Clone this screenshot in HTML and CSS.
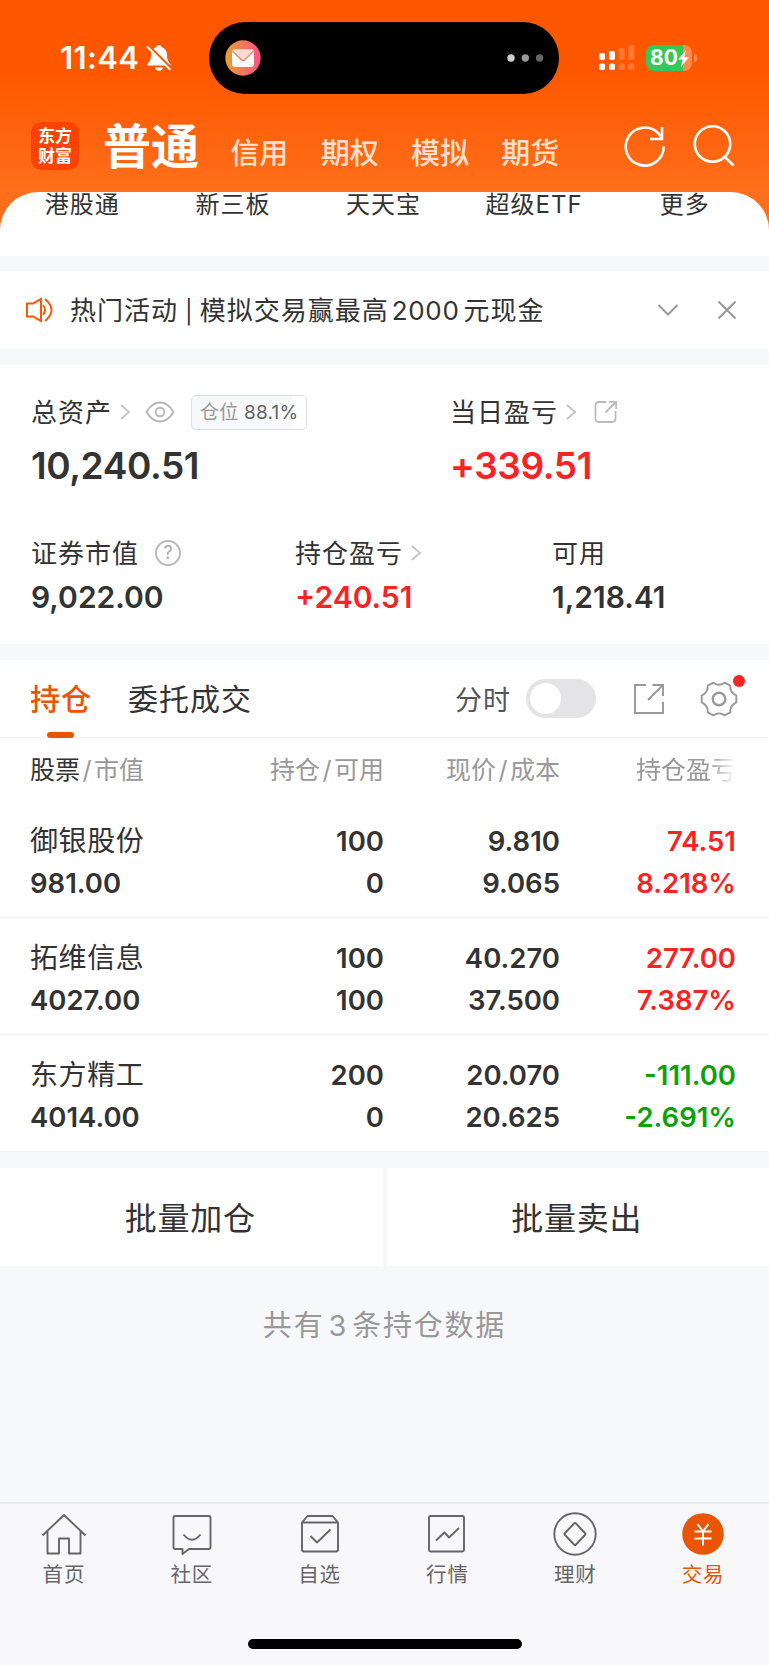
FILE: index.html
```html
<!DOCTYPE html>
<html lang="zh-CN">
<head>
    <meta charset="UTF-8">
    <meta name="viewport" content="width=device-width, initial-scale=1.0">
    <title>普通交易</title>
    <link rel="stylesheet" href="styles.css">
</head>
<body>
    <header class="header">
        <div class="status-bar">
            <span class="time">11:44</span>
            <svg class="bell" width="26" height="28" viewBox="0 0 26 28">
                <path d="M13 1c-1.600 0-2.500 1-2.700 2.200C6.500 4.400 5 7.500 5 11c0 5-1.500 6.500-3.500 9v1.500h23V20c-2-2.500-3.500-4-3.500-9 0-3.500-1.500-6.600-5.300-7.800C15.500 2 14.600 1 13 1z" fill="#fff"/>
                <path d="M8.800 23.500h8.400c-.7 2-2.200 3.300-4.200 3.300s-3.500-1.300-4.200-3.300z" fill="#fff"/>
                <path d="M2.500 1.500L27 26" stroke="#ff5700" stroke-width="2.400"/>
                <path d="M1 2.500L24.500 26" stroke="#fff" stroke-width="2"/>
            </svg>
            <div class="island">
                <svg width="36" height="36" viewBox="0 0 36 36">
                    <defs>
                        <linearGradient id="mail" x1="0" x2="1" y1="0" y2="0">
                            <stop offset="0" stop-color="#e8a030"/>
                            <stop offset="1" stop-color="#ff4f8b"/>
                        </linearGradient>
                    </defs>
                    <circle cx="18" cy="18" r="17.700" fill="url(#mail)"/>
                    <rect x="7" y="9.500" width="22" height="17.500" rx="3" fill="#fff"/>
                    <path d="M8 9.500h20l-8.500 10q-1.500 1.500-3 0z" fill="#ffdcd2"/>
                    <path d="M7.500 11l9 9q1.500 1.300 3 0l9-9" fill="none" stroke="#f3806a" stroke-width="1.300"/>
                </svg>
                <svg width="38" height="8" viewBox="0 0 38 8">
                    <circle cx="4" cy="4" r="3.700" fill="#d0d0d0"/>
                    <circle cx="18.300" cy="4" r="3.700" fill="#999"/>
                    <circle cx="32.600" cy="4" r="3.700" fill="#666"/>
                </svg>
            </div>
            <svg class="signal" width="36" height="26" viewBox="0 0 36 26" fill="#fff">
                <rect x="0" y="8" width="6" height="7" rx="1.800"/>
                <rect x="0" y="18.500" width="6" height="6.500" rx="1.800"/>
                <rect x="10" y="6" width="6" height="9" rx="1.800"/>
                <rect x="10" y="18.500" width="6" height="6.500" rx="1.800"/>
                <g opacity=".2">
                    <rect x="19.700" y="3" width="6" height="12" rx="1.800"/>
                    <rect x="19.700" y="18.500" width="6" height="6.500" rx="1.800"/>
                    <rect x="29.300" y="0" width="6" height="15" rx="1.800"/>
                    <rect x="29.300" y="18.500" width="6" height="6.500" rx="1.800"/>
                </g>
            </svg>
            <div class="battery">
                <span>80</span>
                <svg width="11" height="17" viewBox="0 0 11 17"><path d="M8 0L0 9.500h4.500L3 17l8-10H6.300z" fill="#fff"/></svg>
            </div>
        </div>
        <div class="nav-top">
            <div class="logo">东方<br>财富</div>
            <div class="account-tabs">
                <span class="current">普通</span>
                <span>信用</span>
                <span>期权</span>
                <span>模拟</span>
                <span>期货</span>
            </div>
            <svg class="refresh" width="42" height="42" viewBox="0 0 42 42" fill="none" stroke="#fff" stroke-width="2.600">
                <path d="M39.700 21.500A19 19 0 1 1 34.500 8.500l3.500 4.500"/>
                <path d="M38 2v12H26"/>
            </svg>
            <svg class="search" width="42" height="42" viewBox="0 0 42 42" fill="none" stroke="#fff" stroke-width="2.600">
                <circle cx="19.500" cy="19" r="17.700"/>
                <path d="M31.500 31.500l9 9"/>
            </svg>
        </div>
    </header>

    <nav class="shortcuts">
        <span>港股通</span>
        <span>新三板</span>
        <span>天天宝</span>
        <span>超级ETF</span>
        <span>更多</span>
    </nav>

    <section class="notice">
        <svg width="28" height="26" viewBox="0 0 28 26" fill="none" stroke="#ff5700" stroke-width="2">
            <path d="M2 6.500h6l8-4.500v22l-8-4.500H2z"/>
            <path d="M18 8q4 5 0 10"/>
            <path d="M20 2q13 11 0 22"/>
        </svg>
        <p>热门活动<span class="bar">|</span>模拟交易赢最高<span class="amount">2000</span>元现金</p>
        <svg class="down" width="22" height="14" viewBox="0 0 22 14" fill="none" stroke="#999" stroke-width="2"><path d="M1.500 2L11 11.500 20.500 2"/></svg>
        <svg width="20" height="20" viewBox="0 0 20 20" fill="none" stroke="#999" stroke-width="2"><path d="M1.500 1.500l17 17M18.500 1.500l-17 17"/></svg>
    </section>

    <section class="assets">
        <div class="asset-row main-row">
            <div class="asset">
                <div class="label"><span>总资产</span>
                    <svg class="arrow" width="12" height="18" viewBox="0 0 12 18"><path d="M2 2l8 7-8 7"/></svg>
                    <svg class="eye" width="30" height="22" viewBox="0 0 30 22" fill="none" stroke="#b8b8b8" stroke-width="1.900">
                        <path d="M1.500 11Q7 1.500 15 1.500T28.500 11Q23 20.500 15 20.500T1.500 11z"/>
                        <circle cx="15" cy="11" r="4.300"/>
                    </svg>
                    <div class="position">仓位 <b>88.1%</b></div>
                </div>
                <div class="value">10,240.51</div>
            </div>
            <div class="asset">
                <div class="label"><span>当日盈亏</span>
                    <svg class="arrow" width="12" height="18" viewBox="0 0 12 18"><path d="M2 2l8 7-8 7"/></svg>
                    <svg class="share" width="24" height="24" viewBox="0 0 24 24" fill="none" stroke="#bbb" stroke-width="1.800">
                        <path d="M12 2H5Q1.500 2 1.500 5.500v13Q1.500 22 5 22h13q3.500 0 3.500-3.500V11M11.500 12.500L22 2M15 1.800h7.200V9"/>
                    </svg>
                </div>
                <div class="value up">+339.51</div>
            </div>
        </div>
        <div class="asset-row sub-row">
            <div class="asset">
                <div class="label"><span>证券市值</span>
                    <div class="help">?</div>
                </div>
                <div class="value">9,022.00</div>
            </div>
            <div class="asset">
                <div class="label"><span>持仓盈亏</span>
                    <svg class="arrow" width="12" height="18" viewBox="0 0 12 18"><path d="M2 2l8 7-8 7"/></svg>
                </div>
                <div class="value up">+240.51</div>
            </div>
            <div class="asset">
                <div class="label"><span>可用</span></div>
                <div class="value">1,218.41</div>
            </div>
        </div>
    </section>

    <section class="holdings">
        <div class="tabs">
            <span class="tab active">持仓</span>
            <span class="tab">委托成交</span>
            <span class="chart-label">分时</span>
            <span class="switch"></span>
            <svg class="export" width="32" height="32" viewBox="0 0 32 32" fill="none" stroke="#999" stroke-width="1.900">
                <path d="M13 2H2v28h28V19M15 17L29 3M19.500 2H30v11"/>
            </svg>
            <div class="gear">
                <svg width="38" height="38" viewBox="0 0 38 38" fill="none" stroke="#999" stroke-width="1.900" stroke-linejoin="round">
                    <path d="M13.500 2.700Q19 7 24.500 2.700L30.300 5.600Q29.500 12 36.300 15.600V22.400Q29.500 26 30.300 32.400L24.500 35.300Q19 31.500 13.500 35.300L7.700 32.400Q8.500 26 1.700 22.400V15.600Q8.500 12 7.700 5.600z"/>
                    <circle cx="19" cy="19" r="6.300" stroke-width="2.400"/>
                </svg>
                <i class="dot"></i>
            </div>
        </div>
        <div class="row head">
            <div><em>股票</em><i>/</i>市值</div>
            <div>持仓<i>/</i>可用</div>
            <div>现价<i>/</i>成本</div>
            <div class="fade">持仓盈亏</div>
        </div>
        <div class="row">
            <div><span class="name">御银股份</span><br>981.00</div>
            <div>100<br>0</div>
            <div>9.810<br>9.065</div>
            <div class="up">74.51<br>8.218%</div>
        </div>
        <div class="row">
            <div><span class="name">拓维信息</span><br>4027.00</div>
            <div>100<br>100</div>
            <div>40.270<br>37.500</div>
            <div class="up">277.00<br>7.387%</div>
        </div>
        <div class="row">
            <div><span class="name">东方精工</span><br>4014.00</div>
            <div>200<br>0</div>
            <div>20.070<br>20.625</div>
            <div class="down-price">-111.00<br>-2.691%</div>
        </div>
    </section>

    <div class="batch">
        <button>批量加仓</button>
        <button>批量卖出</button>
    </div>
    <p class="total">共有<span>3</span>条持仓数据</p>

    <footer class="tab-bar">
        <div class="items">
            <a>
                <svg width="46" height="46" viewBox="0 0 46 46"><path d="M1.500 24.500L23 4l21.500 20.500M6.500 20.500v22H18V27.500h10v15h11.500v-22"/></svg>
                首页
            </a>
            <a>
                <svg width="46" height="46" viewBox="0 0 46 46"><path d="M6 5h34q1.500 0 1.500 1.500v30Q41.500 38 40 38H20l-6.500 5v-5H6q-1.500 0-1.500-1.500v-30Q4.500 5 6 5zM14.500 23.500q8.500 10.500 17 0"/></svg>
                社区
            </a>
            <a>
                <svg width="46" height="46" viewBox="0 0 46 46"><path d="M5 11.500V38.500Q5 40.500 7 40.500H39q2 0 2-2V11.500L35.500 5h-25zM5 11.500h36M13.500 25l6.500 6.500L33.500 18.500"/></svg>
                自选
            </a>
            <a>
                <svg width="46" height="46" viewBox="0 0 46 46"><rect x="5" y="5" width="35" height="35.500" rx="1.500"/><path d="M12 29.500l8.500-8 4.500 5 10-9.500"/></svg>
                行情
            </a>
            <a>
                <svg width="46" height="46" viewBox="0 0 46 46"><circle cx="23" cy="23" r="20.700"/><path d="M22 12.500q1-1 2 0L33 22q1 1 0 2l-9 9.500q-1 1-2 0L13 24q-1-1 0-2z"/></svg>
                理财
            </a>
            <a class="active">
                <svg width="46" height="46" viewBox="0 0 46 46"><circle cx="23" cy="23" r="20.800" fill="#ea5504" stroke="none"/><path d="M17.500 13l5.500 7.500 5.500-7.500M14.500 20.500h17M14.500 27.500h17M23 20.500v14" stroke="#fff"/></svg>
                交易
            </a>
        </div>
        <div class="home-bar"></div>
    </footer>
</body>
</html>
```

FILE: styles.css
```css
* {
    box-sizing: border-box;
}
body {
    margin: 0;
    height: 1665px;
    display: flex;
    flex-direction: column;
    background-color: #f7f8fa;
    color: #333;
    font-family: Inter, "Noto Sans CJK SC", sans-serif;
    overflow: hidden;
}
svg {
    flex-shrink: 0;
}
p {
    margin: 0;
}
i, em {
    font-style: normal;
}
.up {
    color: #fa2323;
}
.down-price {
    color: #09a309;
}

/* header */
.header {
    height: 240px;
    flex-shrink: 0;
    color: #fff;
    background: linear-gradient(#ff5700 0, #ff5700 70px, #ff6e1a 190px, #ff6e1a);
}
.status-bar {
    height: 116px;
    display: flex;
    align-items: center;
}
.time {
    width: 86px;
    margin-left: 60px;
    font-size: 31px;
    font-weight: 600;
    letter-spacing: .4px;
    line-height: 36px;
}
.bell {
    margin-right: 37px;
}
.island {
    width: 350px;
    height: 72px;
    padding: 0 14px 0 16px;
    border-radius: 36px;
    background-color: #000;
    display: flex;
    align-items: center;
    justify-content: space-between;
}
.signal {
    margin-left: 40px;
}
.battery {
    position: relative;
    width: 46px;
    height: 26px;
    margin-left: 11px;
    padding-left: 4px;
    border-radius: 8px;
    background: linear-gradient(90deg, #34c759 37px, #ff8a50 37px);
    display: flex;
    align-items: center;
    font-size: 21px;
    font-weight: 700;
}
.battery span {
    margin-top: -2px;
}
.battery::after {
    content: "";
    position: absolute;
    right: -5px;
    top: 9px;
    width: 3px;
    height: 8px;
    border-radius: 0 3px 3px 0;
    background-color: #ff8a50;
}
.nav-top {
    height: 60px;
    padding: 0 34px 0 31px;
    display: flex;
    align-items: center;
}
.logo {
    width: 48px;
    height: 48px;
    padding-top: 4px;
    border-radius: 10px;
    background-color: #ff4200;
    font-size: 17px;
    line-height: 20px;
    font-weight: 700;
    text-align: center;
}
.account-tabs {
    flex: 1;
    margin-left: 24px;
    padding-top: 9px;
    display: flex;
    align-items: baseline;
    gap: 32.300px;
    font-size: 29px;
    font-weight: 500;
    line-height: 60px;
    color: #ffe0cf;
}
.account-tabs .current {
    margin-right: -1px;
    font-size: 48px;
    font-weight: 700;
    color: #fff;
}
.refresh {
    margin-right: 27px;
}

.shortcuts {
    height: 64px;
    flex-shrink: 0;
    margin-top: -48px;
    padding: 0 9px 0 7px;
    border-radius: 38px 38px 0 0;
    background-color: #fff;
    display: flex;
    font-size: 24px;
    line-height: 26px;
    letter-spacing: 1px;
    text-align: center;
}
.shortcuts span {
    flex: 1;
}

.notice {
    height: 78px;
    flex-shrink: 0;
    margin-top: 15px;
    padding: 0 32px 0 25px;
    background-color: #fff;
    display: flex;
    align-items: center;
    font-size: 26px;
    letter-spacing: 1px;
}
.notice p {
    flex: 1;
    margin-left: 17px;
    padding-bottom: 3px;
}
.bar {
    margin: 0 6px 0 7px;
    font-size: 23px;
}
.amount {
    margin: 0 4px 0 3px;
    letter-spacing: .7px;
}
.down {
    margin-right: 38px;
}

/* assets */
.assets {
    height: 279px;
    flex-shrink: 0;
    margin-top: 16px;
    padding: 28px 31px 0;
    background-color: #fff;
}
.asset-row {
    display: grid;
}
.main-row {
    grid-template-columns: 419px 1fr;
    height: 141px;
}
.sub-row {
    grid-template-columns: 264px 257px 1fr;
}
.label {
    height: 38px;
    display: flex;
    align-items: center;
    font-size: 26px;
    letter-spacing: 1px;
}
.label > span {
    padding-bottom: 3px;
}
.arrow {
    margin-left: 7px;
    fill: none;
    stroke: #c4c4c4;
    stroke-width: 1.800;
}
.eye {
    margin-left: 14px;
}
.position {
    height: 35px;
    margin-left: 16px;
    padding: 0 8px;
    border: 1px solid #dfdfe2;
    border-radius: 5px;
    background: linear-gradient(90deg, #f7f8fa 88.1%, #fff 88.1%);
    font-size: 19px;
    line-height: 33px;
    letter-spacing: .2px;
    color: #999;
}
.position b {
    font-weight: 400;
    color: #666;
}
.share {
    margin-left: 17px;
}
.help {
    width: 26px;
    height: 26px;
    margin-left: 16px;
    border: 2px solid #bbb;
    border-radius: 50%;
    font-size: 18px;
    line-height: 22px;
    letter-spacing: 0;
    text-align: center;
    color: #aaa;
}
.value {
    font-weight: 600;
}
.main-row .value {
    margin-top: 12px;
    font-size: 37px;
    line-height: 46px;
    letter-spacing: -.4px;
}
.sub-row .value {
    margin-top: 6px;
    font-size: 30px;
    line-height: 38px;
}

/* holdings */
.holdings {
    height: 492px;
    flex-shrink: 0;
    margin-top: 16px;
    background-color: #fff;
}
.tabs {
    height: 78px;
    padding: 0 31px 0 30px;
    border-bottom: 1px solid #f2f2f4;
    display: flex;
    align-items: center;
    font-size: 30px;
    letter-spacing: 1px;
}
.tab {
    position: relative;
    margin-right: 36px;
    padding-bottom: 4px;
}
.tab.active {
    font-weight: 500;
    color: #ea5504;
}
.tab.active::after {
    content: "";
    position: absolute;
    left: 17px;
    bottom: -15px;
    width: 27px;
    height: 6px;
    border-radius: 3px;
    background-color: #ea5504;
}
.chart-label {
    margin-left: auto;
    padding-bottom: 1px;
    font-size: 27px;
    color: #555;
}
.switch {
    width: 70px;
    height: 39px;
    margin-left: 15px;
    padding: 4px;
    border-radius: 20px;
    background-color: #e4e4e6;
}
.switch::before {
    content: "";
    display: block;
    width: 31px;
    height: 31px;
    border-radius: 50%;
    background-color: #fff;
}
.export {
    margin-left: 37px;
}
.gear {
    position: relative;
    height: 38px;
    margin-left: 35px;
}
.dot {
    position: absolute;
    right: -7px;
    top: -5px;
    width: 12px;
    height: 12px;
    border-radius: 50%;
    background-color: #fa2323;
}
.row {
    height: 117px;
    padding: 19px 33px 0 30px;
    display: grid;
    grid-template-columns: 190px 164px 176px 176px;
    border-bottom: 1px solid #f2f2f4;
    font-size: 27.500px;
    font-weight: 600;
    line-height: 42.300px;
    text-align: right;
}
.row div:first-child {
    text-align: left;
}
.name {
    font-size: 28px;
    font-weight: 400;
    letter-spacing: .6px;
}
.head {
    height: 63px;
    padding-top: 11px;
    border-bottom: 0;
    font-size: 25px;
    font-weight: 400;
    color: #999;
}
.head em {
    color: #333;
}
.head i {
    margin: 0 2.500px;
}
.fade {
    -webkit-mask-image: linear-gradient(90deg, #000 85%, transparent);
    mask-image: linear-gradient(90deg, #000 85%, transparent);
}

.batch {
    height: 98px;
    flex-shrink: 0;
    margin-top: 16px;
    display: flex;
    gap: 4px;
}
.batch button {
    flex: 1;
    padding: 0 2px 3px 0;
    border: none;
    background-color: #fff;
    font-family: inherit;
    font-size: 32px;
    letter-spacing: .7px;
    color: #333;
}
.total {
    margin-top: 38px;
    font-size: 29px;
    line-height: 44px;
    letter-spacing: 1.800px;
    text-align: center;
    color: #999;
}
.total span {
    margin: 0 4px;
}

/* bottom bar */
.tab-bar {
    height: 163px;
    margin-top: auto;
    padding-top: 7px;
    border-top: 2px solid #ebecee;
    background-color: #f8f8fb;
}
.items {
    display: flex;
    margin-right: 2px;
}
.items a {
    flex: 1;
    display: flex;
    flex-direction: column;
    align-items: center;
    font-size: 20.500px;
    line-height: 36px;
    letter-spacing: .8px;
    color: #666;
}
.items svg {
    fill: none;
    stroke: #666;
    stroke-width: 1.900;
    stroke-linejoin: round;
}
.items .active {
    color: #ea5504;
}
.home-bar {
    width: 274px;
    height: 10px;
    margin: 46px auto 0;
    border-radius: 5px;
    background-color: #000;
}
```
